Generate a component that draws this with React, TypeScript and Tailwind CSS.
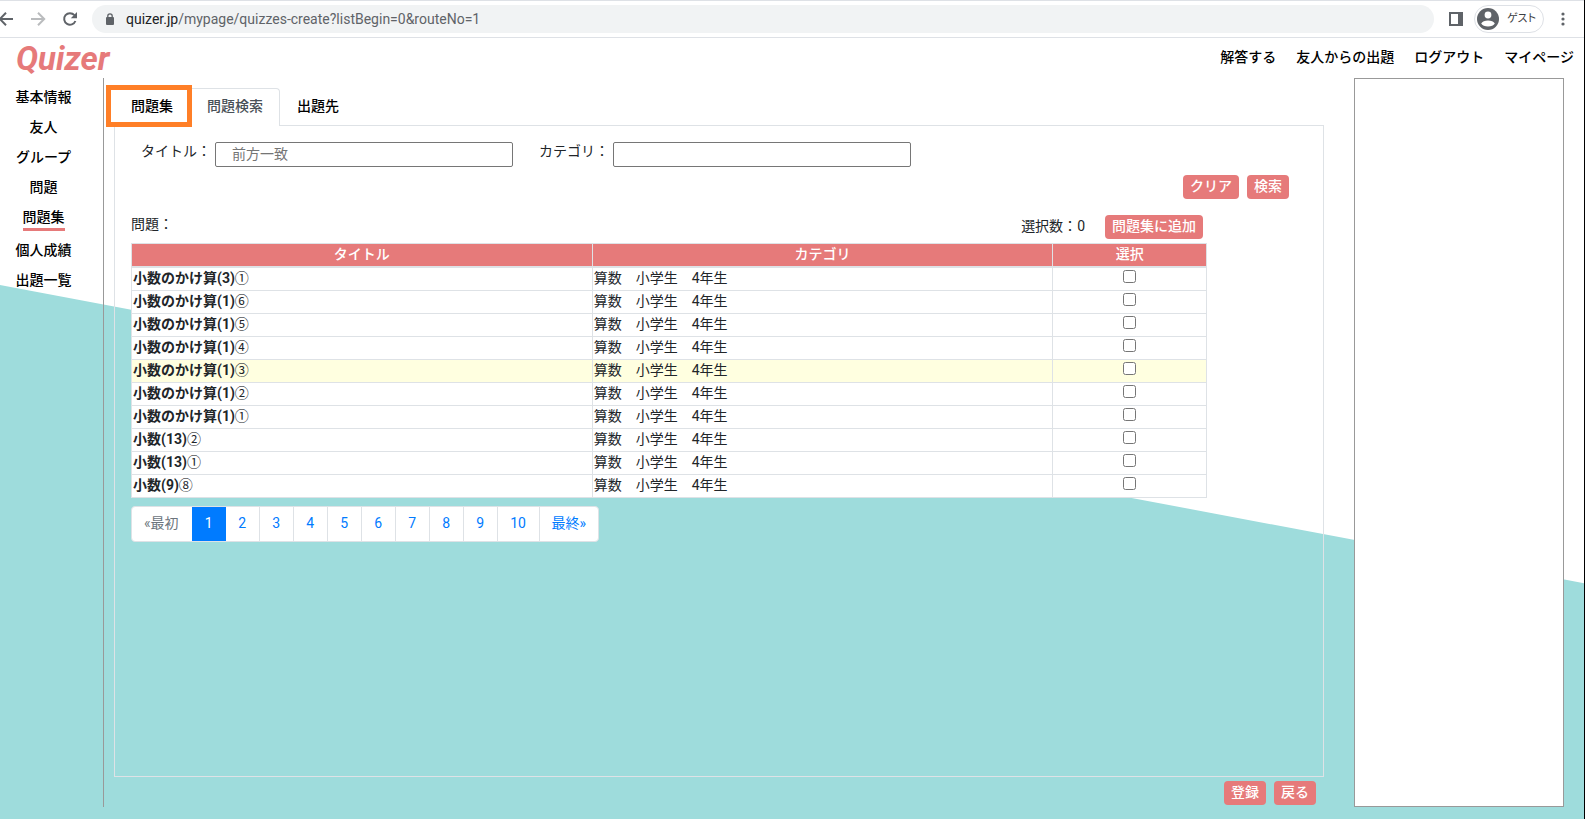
import { useState } from 'react';

const HEADER_LINKS = ['解答する', '友人からの出題', 'ログアウト', 'マイページ'];

const SIDE_LINKS = ['基本情報', '友人', 'グループ', '問題', '問題集', '個人成績', '出題一覧'];

const QUESTIONS = [
  { title: '小数のかけ算(3)', mark: '①' },
  { title: '小数のかけ算(1)', mark: '⑥' },
  { title: '小数のかけ算(1)', mark: '⑤' },
  { title: '小数のかけ算(1)', mark: '④' },
  { title: '小数のかけ算(1)', mark: '③' },
  { title: '小数のかけ算(1)', mark: '②' },
  { title: '小数のかけ算(1)', mark: '①' },
  { title: '小数(13)', mark: '②' },
  { title: '小数(13)', mark: '①' },
  { title: '小数(9)', mark: '⑧' },
];

const CATEGORY = '算数　小学生　4年生';
const HIGHLIGHTED_ROW = 4;
const PAGES = [1, 2, 3, 4, 5, 6, 7, 8, 9, 10];

const actionButton = 'h-6 rounded bg-[#e67a7a] px-[7px] leading-[22px] pb-[2px] font-medium text-white';

function BrowserBar() {
  return (
    <div className="flex h-[38px] items-center border-y border-[#dee1e6] bg-white text-[#5f6368]">
      <button aria-label="戻る" className="w-[14px] overflow-hidden">
        <svg width="14" height="14" viewBox="0 0 14 14" fill="none" stroke="currentColor" strokeWidth="2">
          <path d="M13 7H0M6 0.8L-0.2 7L6 13.2" />
        </svg>
      </button>
      <button aria-label="進む" className="ml-[17px] text-[#babcbe]">
        <svg width="15" height="14" viewBox="0 0 15 14" fill="none" stroke="currentColor" strokeWidth="2">
          <path d="M0 7H13M7 0.8L13.2 7L7 13.2" />
        </svg>
      </button>
      <button aria-label="再読み込み" className="ml-4">
        <svg width="16" height="16" viewBox="0 0 16 16" fill="none">
          <path d="M13.4 10A5.8 5.8 0 1 1 12.4 4.2" stroke="currentColor" strokeWidth="2" />
          <path d="M15 1V7.2H8.8Z" fill="currentColor" />
        </svg>
      </button>
      <div className="ml-[14px] flex h-7 flex-1 items-center rounded-full bg-[#f1f3f4] pl-[14px]">
        <svg width="8" height="12" viewBox="0 0 8 12">
          <rect x="0" y="4" width="8" height="8" rx="1" fill="currentColor" />
          <path d="M1.8 5V3A2.2 2.2 0 0 1 6.2 3V5" fill="none" stroke="currentColor" strokeWidth="1.3" />
        </svg>
        <span className="ml-3 text-sm">
          <span className="text-[#202124]">quizer.jp</span>/mypage/quizzes-create?listBegin=0&amp;routeNo=1
        </span>
      </div>
      <button aria-label="サイドパネル" className="ml-[15px]">
        <svg width="14" height="14" viewBox="0 0 14 14">
          <path d="M0 0H14V14H0ZM2 2V12H9V2Z" fill="currentColor" fillRule="evenodd" />
        </svg>
      </button>
      <button className="ml-[11px] flex h-7 w-[70px] items-center rounded-full border border-[#dee1e6] pl-[2px]">
        <svg width="22" height="22" viewBox="0 0 22 22">
          <circle cx="11" cy="11" r="11" fill="currentColor" />
          <circle cx="11" cy="7" r="3.4" fill="#fff" />
          <path d="M4.2 15.6C6 11.6 16 11.6 17.8 15.6C16 19.4 6 19.4 4.2 15.6Z" fill="#fff" />
        </svg>
        <span className="ml-2 text-[11px] text-[#3c4043] [font-feature-settings:'palt']">ゲスト</span>
      </button>
      <button aria-label="メニュー" className="mr-[19px] ml-[17px]">
        <svg width="4" height="14" viewBox="0 0 4 14" fill="currentColor">
          <circle cx="2" cy="2" r="1.6" />
          <circle cx="2" cy="7" r="1.6" />
          <circle cx="2" cy="12" r="1.6" />
        </svg>
      </button>
    </div>
  );
}

function Header() {
  return (
    <header className="flex h-10 items-center justify-between pr-[10px] pl-4">
      <a href="#" className="pt-[2px] text-[33px] leading-10 font-bold text-[#e67a7a] italic">Quizer</a>
      <nav className="flex gap-5 pb-[2px] font-medium text-black">
        {HEADER_LINKS.map((label) => (
          <a key={label} href="#">{label}</a>
        ))}
      </nav>
    </header>
  );
}

function Sidebar() {
  return (
    <nav className="flex w-[104px] shrink-0 flex-col items-center gap-[9px] border-r border-[#999] pt-[9px] pr-4 font-medium text-black">
      {SIDE_LINKS.map((label) => (
        <a
          key={label}
          href="#"
          className={label === '問題集' ? 'border-b-[3px] border-[#e67a7a] leading-[21px]' : 'leading-[21px]'}
        >
          {label}
        </a>
      ))}
    </nav>
  );
}

function Tabs() {
  return (
    <div role="tablist" className="relative z-10 -mb-px flex h-[41px] items-start font-medium text-black">
      <button role="tab" className="-ml-2 h-[42px] shrink-0 border-[5px] border-[#ff7f27] pr-[14px] pl-5">問題集</button>
      <button
        role="tab"
        aria-selected="true"
        className="mt-[3px] h-[38px] rounded-tr border-t border-r border-[#dee2e6] bg-white pr-4 pb-1 pl-[15px] text-[#495057]"
      >
        問題検索
      </button>
      <button role="tab" className="mt-[3px] h-[37px] px-[17px] pb-[2px]">出題先</button>
    </div>
  );
}

function QuestionTable({ selected, onToggle }: { selected: number[]; onToggle: (i: number) => void }) {
  return (
    <table className="w-full table-fixed border-collapse bg-white">
      <colgroup>
        <col className="w-3/7" />
        <col className="w-3/7" />
        <col className="w-1/7" />
      </colgroup>
      <thead>
        <tr className="bg-[#e67a7a] text-white">
          {['タイトル', 'カテゴリ', '選択'].map((label) => (
            <th key={label} className="border border-b-2 border-[#dee2e6] px-0 pt-0 pb-[2px] leading-5 font-medium">{label}</th>
          ))}
        </tr>
      </thead>
      <tbody>
        {QUESTIONS.map((q, i) => (
          <tr key={i} className={i === HIGHLIGHTED_ROW ? 'bg-[#ffffe0]' : ''}>
            <td className="border border-[#dee2e6] px-px pt-0 pb-[2px] leading-5 font-bold">
              {q.title}<span className="font-normal">{q.mark}</span>
            </td>
            <td className="border border-[#dee2e6] px-px pt-0 pb-[2px] leading-5">{CATEGORY}</td>
            <td className="border border-[#dee2e6] p-0 pb-[5px] text-center">
              <input
                type="checkbox"
                aria-label={`${q.title}${q.mark}を選択`}
                checked={selected.includes(i)}
                onChange={() => onToggle(i)}
                className="mx-auto block size-[13px]"
              />
            </td>
          </tr>
        ))}
      </tbody>
    </table>
  );
}

function Pagination() {
  const [page, setPage] = useState(1);

  function pageClass(n: number) {
    if (n === page) return 'w-[34px] bg-[#007bff] pb-[2px] text-white';
    return n < 10 ? 'w-[34px] border-r border-[#dee2e6] pb-[2px]' : 'w-[42px] border-r border-[#dee2e6] pb-[2px]';
  }

  return (
    <nav className="mt-2 flex w-fit overflow-hidden rounded border border-[#dee2e6] bg-white leading-8 text-[#007bff]">
      <button disabled className="pr-[13px] pb-[2px] pl-3 text-[#6c757d]">«最初</button>
      {PAGES.map((n) => (
        <button key={n} onClick={() => setPage(n)} className={pageClass(n)}>
          {n}
        </button>
      ))}
      <button className="px-3 pb-[2px]">最終»</button>
    </nav>
  );
}

function SearchPanel() {
  const [selected, setSelected] = useState<number[]>([]);

  function toggle(i: number) {
    setSelected((prev) => (prev.includes(i) ? prev.filter((n) => n !== i) : [...prev, i]));
  }

  return (
    <section className="flex-1 border border-[#dee2e6] px-4 pt-4 pb-10">
      <form onSubmit={(e) => e.preventDefault()}>
        <div className="flex pl-[10px]">
          <label htmlFor="title" className="w-[74px] leading-[18px]">タイトル：</label>
          <input
            id="title"
            placeholder="前方一致"
            className="h-[25px] w-[298px] rounded-xs border border-[#767676] bg-white px-4 pb-[2px] placeholder:text-[#757575]"
          />
          <label htmlFor="category" className="ml-[26px] w-[74px] leading-[18px]">カテゴリ：</label>
          <input id="category" className="h-[25px] w-[298px] rounded-xs border border-[#767676] bg-white px-4 pb-[2px]" />
        </div>
        <div className="mt-2 flex justify-end gap-2 pr-[18px]">
          <button type="reset" className={actionButton}>クリア</button>
          <button type="submit" className={actionButton}>検索</button>
        </div>
      </form>

      <div className="mt-4 mr-[100px]">
        <div className="mb-1 flex items-start">
          <span className="leading-[18px]">問題：</span>
          <span className="mr-5 ml-auto leading-[22px]">選択数：{selected.length}</span>
          <button className={`mr-1 ${actionButton}`}>問題集に追加</button>
        </div>
        <QuestionTable selected={selected} onToggle={toggle} />
        <Pagination />
      </div>
    </section>
  );
}

export default function App() {
  return (
    <div className="relative isolate flex min-h-screen flex-col border-r border-black bg-white font-[Roboto,'Noto_Sans_CJK_JP',sans-serif] text-sm text-[#212529]">
      {/* Slanted backdrop */}
      <div className="absolute inset-0 -z-10 bg-[#9edcdc] [clip-path:polygon(0_34.8%,100%_71.2%,100%_100%,0_100%)]" />
      <BrowserBar />
      <Header />
      <div className="flex flex-1 pr-5 pb-3">
        <Sidebar />
        <main className="mr-[30px] ml-[10px] flex flex-1 flex-col pt-[7px]">
          <Tabs />
          <SearchPanel />
          <div className="mt-1 mb-[2px] flex justify-end gap-2 pr-2">
            <button className={actionButton}>登録</button>
            <button className={actionButton}>戻る</button>
          </div>
        </main>
        <aside className="w-[210px] shrink-0 border border-[#999] bg-white" />
      </div>
    </div>
  );
}
